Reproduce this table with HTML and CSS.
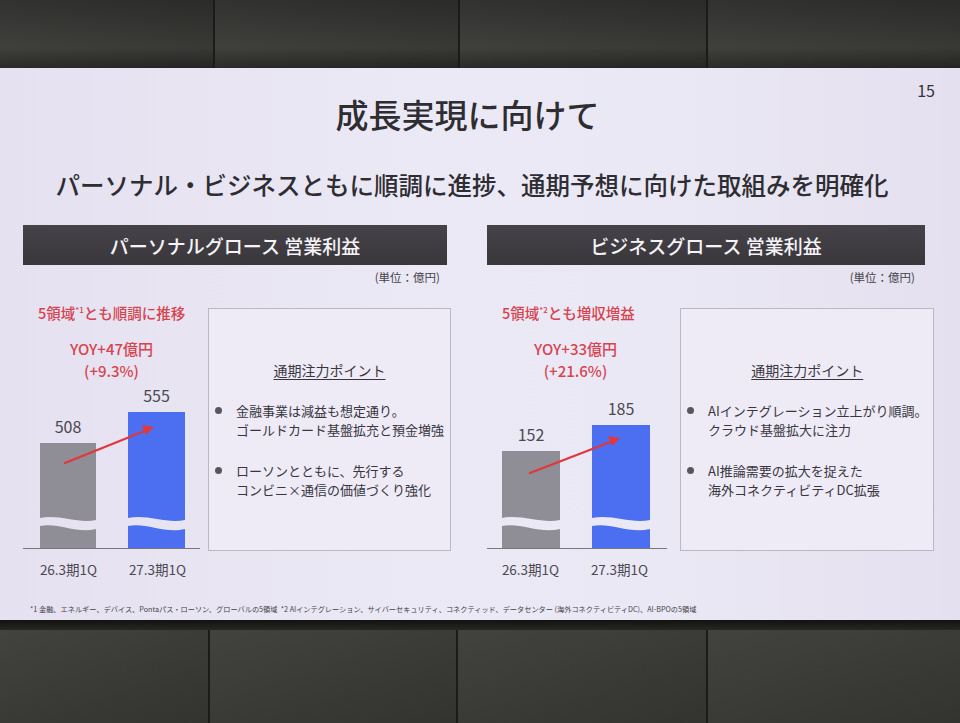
FILE: index.html
```html
<!DOCTYPE html>
<html lang="ja">
<head>
<meta charset="utf-8">
<title>成長実現に向けて</title>
<link rel="stylesheet" href="styles.css">
</head>
<body>
<div class="wall wall-top">
  <div class="tile t1"></div><div class="tile t2"></div><div class="tile t3"></div><div class="tile t4"></div>
</div>
<main class="slide">
  <header class="title-row">
    <div></div>
    <h1 class="title">成長実現に向けて</h1>
    <div class="page">15</div>
  </header>
  <p class="lead">パーソナル・ビジネスともに順調に進捗、通期予想に向けた取組みを明確化</p>
  <div class="panels">
    <section class="panel">
      <h2 class="bar-title">パーソナルグロース 営業利益</h2>
      <div class="unit">(単位：億円)</div>
      <div class="panel-body">
        <div class="chart chart-left">
          <p class="highlight">5領域<sup>*1</sup>とも順調に推移</p>
          <div class="yoy"><div class="yoy-line">YOY+47億円</div><div class="yoy-line">(+9.3%)</div></div>
          <div class="bars">
            <div class="col">
              <span class="val">508</span>
              <svg class="bar" width="56" height="105" viewBox="0 0 56 105"><path fill="#8f8d95" d="M0 0H56V77C38 81 20 71 0 75Z"/><path fill="#8f8d95" d="M0 83C18 79 36 91 56 86V105H0Z"/></svg>
            </div>
            <div class="col">
              <span class="val">555</span>
              <svg class="bar" width="57" height="136" viewBox="0 0 57 136"><path fill="#4b6ff0" d="M0 0H57V108C38 112 20 102 0 106Z"/><path fill="#4b6ff0" d="M0 114C18 110 36 122 57 117V136H0Z"/></svg>
            </div>
            <svg class="arrow" width="177" height="167" viewBox="0 0 177 167"><line x1="42" y1="81" x2="124" y2="48" stroke="#e0383c" stroke-width="2.4" stroke-linecap="round"/><path d="M131 45L119 43L123 53Z" fill="#e0383c"/></svg>
          </div>
          <div class="xlabels"><span>26.3期1Q</span><span>27.3期1Q</span></div>
        </div>
        <div class="points">
          <p class="points-title">通期注力ポイント</p>
          <ul>
            <li>金融事業は減益も想定通り。<br>ゴールドカード基盤拡充と預金増強</li>
            <li>ローソンとともに、先行する<br>コンビニ×通信の価値づくり強化</li>
          </ul>
        </div>
      </div>
    </section>
    <section class="panel">
      <h2 class="bar-title">ビジネスグロース 営業利益</h2>
      <div class="unit unit-right">(単位：億円)</div>
      <div class="panel-body">
        <div class="chart chart-right">
          <p class="highlight">5領域<sup>*2</sup>とも増収増益</p>
          <div class="yoy"><div class="yoy-line">YOY+33億円</div><div class="yoy-line">(+21.6%)</div></div>
          <div class="bars">
            <div class="col">
              <span class="val">152</span>
              <svg class="bar" width="58" height="97" viewBox="0 0 58 97"><path fill="#8f8d95" d="M0 0H58V69C39 73 20 63 0 67Z"/><path fill="#8f8d95" d="M0 75C18 71 37 83 58 78V97H0Z"/></svg>
            </div>
            <div class="col">
              <span class="val">185</span>
              <svg class="bar" width="58" height="123" viewBox="0 0 58 123"><path fill="#4b6ff0" d="M0 0H58V95C39 99 20 89 0 93Z"/><path fill="#4b6ff0" d="M0 101C18 97 37 109 58 104V123H0Z"/></svg>
            </div>
            <svg class="arrow" width="180" height="167" viewBox="0 0 180 167"><line x1="43" y1="91" x2="126" y2="59" stroke="#e0383c" stroke-width="2.4" stroke-linecap="round"/><path d="M133 56L121 54L125 64Z" fill="#e0383c"/></svg>
          </div>
          <div class="xlabels"><span>26.3期1Q</span><span>27.3期1Q</span></div>
        </div>
        <div class="points">
          <p class="points-title">通期注力ポイント</p>
          <ul>
            <li>AIインテグレーション立上がり順調。<br>クラウド基盤拡大に注力</li>
            <li>AI推論需要の拡大を捉えた<br>海外コネクティビティDC拡張</li>
          </ul>
        </div>
      </div>
    </section>
  </div>
  <p class="foot">*1 金融、エネルギー、デバイス、Pontaパス・ローソン、グローバルの5領域 &nbsp;*2 AIインテグレーション、サイバーセキュリティ、コネクティッド、データセンター (海外コネクティビティDC)、AI-BPOの5領域</p>
</main>
<div class="wall wall-bottom">
  <div class="strip"></div>
  <div class="tiles">
    <div class="tile b1"></div><div class="tile b2"></div><div class="tile b3"></div><div class="tile b4"></div>
  </div>
</div>
</body>
</html>
```
FILE: styles.css
```css
html, body {
  margin: 0;
  padding: 0;
}
body {
  width: 960px;
  height: 723px;
  overflow: hidden;
  background: #353533;
  font-family: "Noto Sans CJK JP", "Noto Sans", sans-serif;
  color: #3a3940;
}

/* wall */
.wall-top {
  height: 68px;
  display: flex;
  background: linear-gradient(180deg, #2b2b29 0%, #3b3b38 70%, #262624 100%);
}
.tile {
  box-sizing: border-box;
  border-right: 2px solid #1b1b1a;
  background: linear-gradient(135deg, rgba(255,255,255,0.03), rgba(0,0,0,0.06));
}
.t1 { width: 215px; }
.t2 { width: 245px; }
.t3 { width: 248px; }
.t4 { flex: 1; border-right: none; }

.wall-bottom {
  height: 103px;
  display: flex;
  flex-direction: column;
  background: #3a3a37;
}
.strip {
  height: 10px;
  background: linear-gradient(180deg, #121211, #262624);
}
.tiles {
  flex: 1;
  display: flex;
  background: linear-gradient(180deg, #3c3c39, #363633);
}
.b1 { width: 210px; }
.b2 { width: 248px; }
.b3 { width: 250px; }
.b4 { flex: 1; border-right: none; }

/* slide */
.slide {
  height: 552px;
  box-sizing: border-box;
  display: flex;
  flex-direction: column;
  background: linear-gradient(90deg, #e5e1f0 0%, #ece9f6 45%, #ebe8f5 70%, #e4e0ef 100%);
}
.title-row {
  display: grid;
  grid-template-columns: 1fr auto 1fr;
  padding: 10px 25px 0 0;
}
.title {
  margin: 16px 0 0;
  font-size: 33px;
  line-height: 40px;
  font-weight: 500;
  color: #2e2d32;
}
.page {
  justify-self: end;
  font-size: 16px;
  line-height: 24px;
  color: #333238;
}
.lead {
  margin: 34px 0 0;
  padding-right: 16px;
  text-align: center;
  font-size: 24.5px;
  line-height: 34px;
  font-weight: 500;
  color: #2e2d32;
  white-space: nowrap;
}

.panels {
  display: grid;
  grid-template-columns: 424px 438px;
  column-gap: 40px;
  margin-top: 23px;
  padding-left: 23px;
}
.bar-title {
  margin: 0;
  height: 40px;
  display: flex;
  align-items: center;
  justify-content: center;
  background: linear-gradient(180deg, #454348, #39373c);
  color: #f5f3f7;
  font-size: 19px;
  font-weight: 500;
}
.unit {
  text-align: right;
  font-size: 11.5px;
  line-height: 14px;
  margin-top: 5px;
  padding-right: 7px;
  color: #444348;
}
.unit-right {
  padding-right: 10px;
}
.panel-body {
  display: flex;
  margin-top: 19px;
}
.chart {
  flex: none;
}
.chart-left { width: 185px; }
.chart-right { width: 193px; }

.highlight {
  margin: 0;
  padding-left: 15px;
  color: #d7434e;
  font-size: 14.5px;
  line-height: 20px;
  font-weight: 500;
  white-space: nowrap;
}
.highlight sup {
  font-size: 8px;
  line-height: 0;
  vertical-align: 6px;
}
.yoy {
  margin-top: 15px;
  width: 177px;
  display: flex;
  flex-direction: column;
  align-items: center;
  color: #d7434e;
  font-weight: 500;
}
.yoy-line {
  font-size: 15px;
  line-height: 22px;
  white-space: nowrap;
}
.bars {
  position: relative;
  height: 167px;
  width: 177px;
  box-sizing: border-box;
  display: flex;
  align-items: flex-end;
  gap: 32px;
  padding-left: 17px;
  border-bottom: 1.5px solid #7a7680;
}
.chart-right .bars {
  width: 180px;
  padding-left: 15px;
}
.col {
  display: flex;
  flex-direction: column;
  align-items: center;
}
.val {
  font-size: 16px;
  line-height: 20px;
  margin-bottom: 7px;
  color: #4a4850;
}
.bar {
  display: block;
}
.arrow {
  position: absolute;
  left: 0;
  top: 0;
  overflow: visible;
}
.xlabels {
  display: flex;
  gap: 32px;
  padding-left: 17px;
  margin-top: 10px;
}
.chart-right .xlabels {
  padding-left: 15px;
}
.xlabels span {
  width: 57px;
  display: flex;
  justify-content: center;
  white-space: nowrap;
  font-size: 13.5px;
  line-height: 20px;
  color: #4a4850;
}

.points {
  flex: 1;
  margin-top: 5px;
  height: 243px;
  box-sizing: border-box;
  border: 1px solid #bbb7c5;
  background: #eeebf7;
  padding: 51px 6px 0;
}
.points-title {
  margin: 0;
  text-align: center;
  font-size: 14px;
  line-height: 20px;
  text-decoration: underline;
  text-underline-offset: 3px;
  text-decoration-thickness: 1px;
  color: #38373e;
}
.points ul {
  list-style: none;
  margin: 21px 0 0;
  padding: 0;
}
.points li {
  position: relative;
  padding-left: 21px;
  font-size: 13px;
  line-height: 19px;
  color: #38373e;
  white-space: nowrap;
}
.points li + li {
  margin-top: 22px;
}
.points li::before {
  content: "";
  position: absolute;
  left: 0;
  top: 6px;
  width: 7px;
  height: 7px;
  border-radius: 50%;
  background: #58565c;
}

.foot {
  margin: 24px 0 0;
  padding-left: 30px;
  font-size: 7.2px;
  line-height: 12px;
  white-space: nowrap;
  color: #444348;
}
```
